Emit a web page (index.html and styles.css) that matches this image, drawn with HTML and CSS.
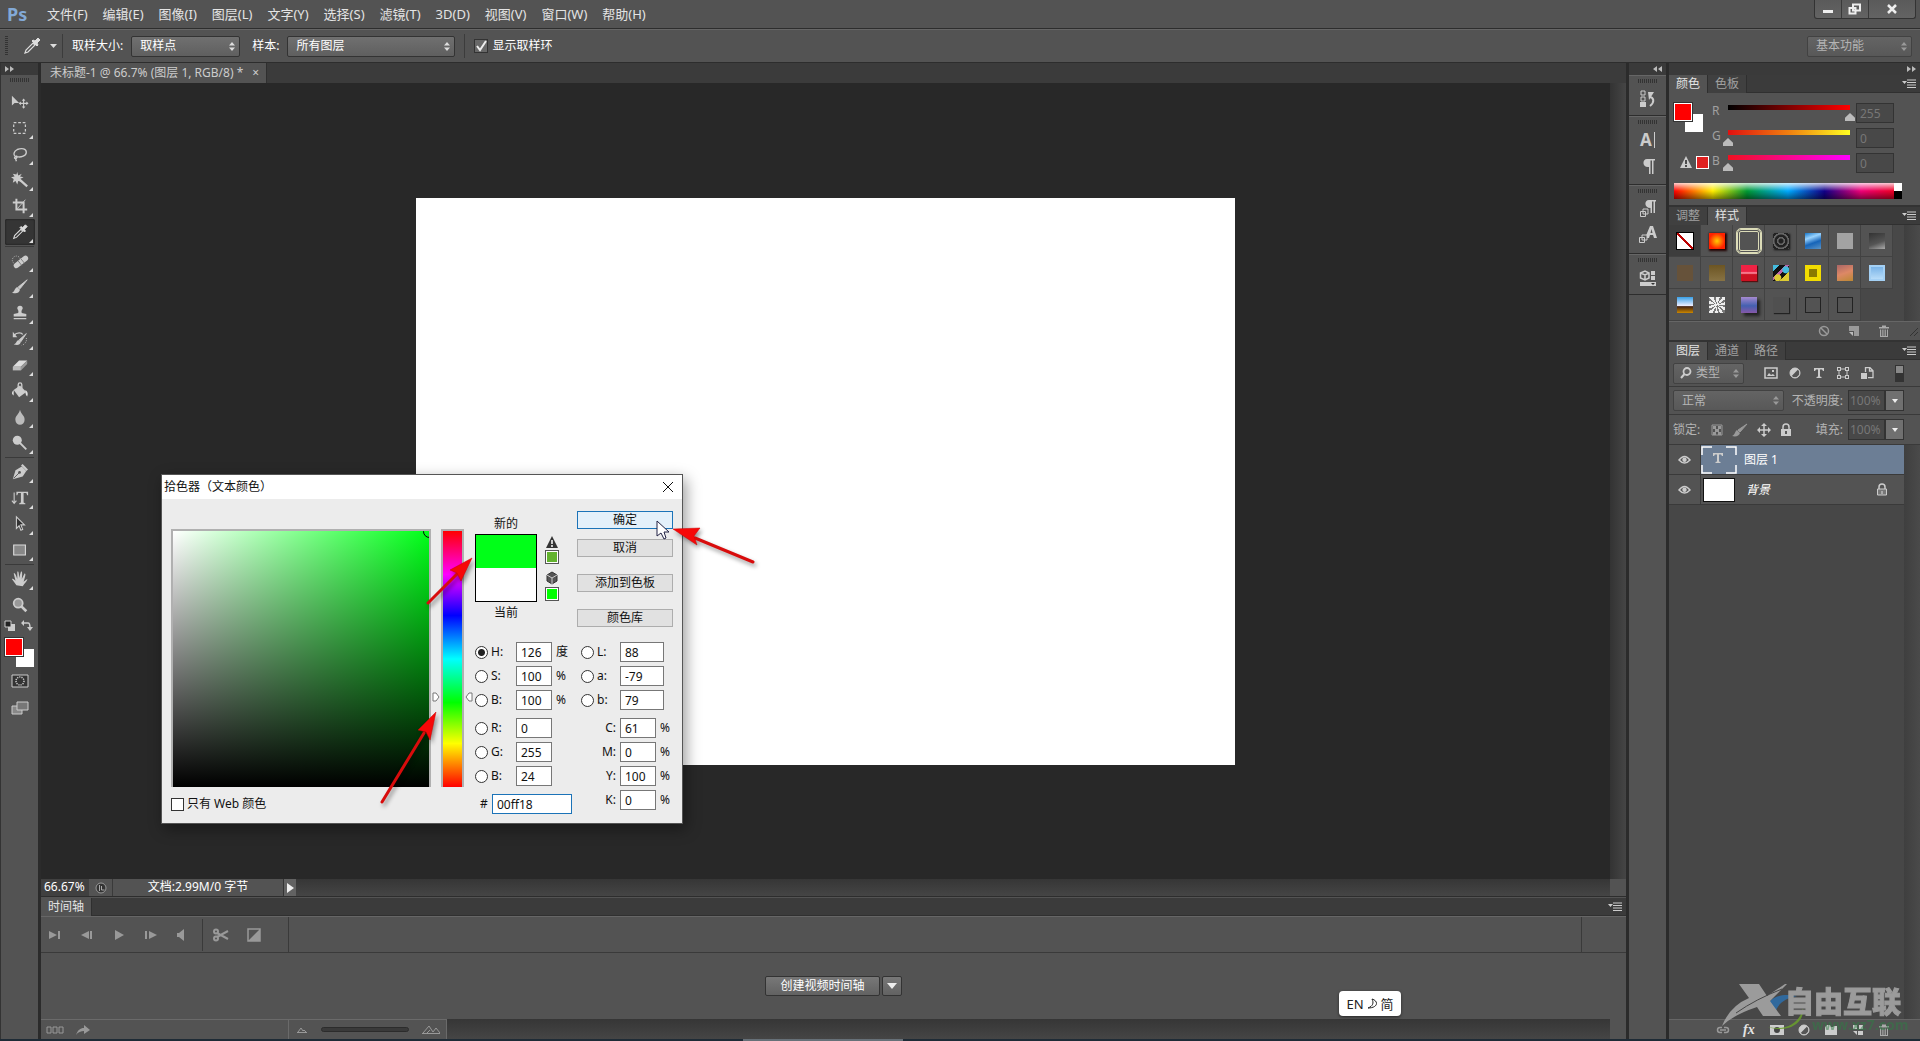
FILE: index.html
```html
<!DOCTYPE html>
<html lang="zh-CN">
<head>
<meta charset="utf-8">
<title>Photoshop</title>
<link rel="stylesheet" href="styles.css">
</head>
<body>
<header class="menubar">
  <span class="logo">Ps</span>
  <nav class="menus">
    <button>文件(F)</button><button>编辑(E)</button><button>图像(I)</button><button>图层(L)</button><button>文字(Y)</button><button>选择(S)</button><button>滤镜(T)</button><button>3D(D)</button><button>视图(V)</button><button>窗口(W)</button><button>帮助(H)</button>
  </nav>
  <div class="winbtns">
    <button aria-label="最小化"><svg width="12" height="12"><path d="M1 7h10v3H1z" fill="#eee"/></svg></button>
    <button aria-label="还原"><svg width="14" height="12"><path d="M5 1.500h7v6H5zM1.500 5h6v5.500h-6z" fill="none" stroke="#eee" stroke-width="2"/></svg></button>
    <button class="wide" aria-label="关闭"><svg width="12" height="12"><path d="M2 2l8 8M10 2l-8 8" stroke="#eee" stroke-width="2.500"/></svg></button>
  </div>
</header>

<div class="options">
  <i class="vgrip"></i>
  <svg class="opt-tool" width="20" height="20" viewBox="0 0 20 20"><use href="#dropper"/></svg>
  <svg width="7" height="4"><path d="M0 0h7L3.500 4z" fill="#ddd"/></svg>
  <i class="vsep"></i>
  <label for="size">取样大小:</label>
  <select id="size" class="sel size"><option>取样点</option></select>
  <label for="sample">样本:</label>
  <select id="sample" class="sel sample"><option>所有图层</option></select>
  <i class="vsep"></i>
  <label class="tick"><input type="checkbox" checked>显示取样环</label>
  <select class="sel dim workspace" aria-label="工作区"><option>基本功能</option></select>
</div>

<main class="work">
  <aside class="tools">
    <div class="dockhead left"><svg width="9" height="6"><path d="M0 0l4 3-4 3zM5 0l4 3-4 3z" fill="#bbb"/></svg></div>
    <i class="hgrip"></i>
    <div class="toollist">
      <button aria-label="移动"><svg viewBox="0 0 20 20"><path d="M1 3v11l3-3h5z" fill="#ccc"/><path d="M14 7v9M9.500 11.500h9" stroke="#ccc" stroke-width="1.200"/><path d="M14 6l2 2.500h-4zM14 17.500l2-2.500h-4zM8.500 11.500l2.500-2v4zM19.500 11.500l-2.500-2v4z" fill="#ccc"/></svg></button>
      <button class="more" aria-label="选框"><svg viewBox="0 0 20 20"><path d="M3 4h13v12H3z" fill="none" stroke="#ccc" stroke-width="1.400" stroke-dasharray="3 2"/></svg></button>
      <button class="more" aria-label="套索"><svg viewBox="0 0 20 20"><path d="M5 13c-3-2-2-6 2-8 5-2 10-1 10 3s-6 6-10 5c-3-1-4 2-2 2s2-2 1-3M5 15l1 3" fill="none" stroke="#ccc" stroke-width="1.500"/></svg></button>
      <button class="more" aria-label="魔棒"><svg viewBox="0 0 20 20"><path d="M7 1l1 4 4-2-2 3 4 1-4 2 2 3-4-1-1 4-2-4-3 2 1-4-3-2 4-1-2-3 4 1z" fill="#ccc"/><path d="M9 9l9 8" stroke="#ccc" stroke-width="2.500"/></svg></button>
      <button class="more" aria-label="裁剪"><svg viewBox="0 0 20 20"><path d="M6 2v12h12M2 6h12v12" fill="none" stroke="#ccc" stroke-width="2.200"/><path d="M7 13l9-10" stroke="#ccc"/></svg></button>
      <button class="more active" aria-label="吸管"><svg viewBox="0 0 20 20"><g id="dropper"><path d="M3 17l1-3 7-7 2 2-7 7z" fill="none" stroke="#ddd" stroke-width="1.200"/><path d="M10 5l1-1 2 1 3-3 2 2-3 3 1 2-1 1z" fill="#ddd" stroke="#ddd"/></g></svg></button>
      <hr>
      <button class="more" aria-label="修复画笔"><svg viewBox="0 0 20 20"><circle cx="6" cy="9" r="4.500" fill="none" stroke="#ccc" stroke-dasharray="1 1.500"/><path d="M6 15l10-8" stroke="#ccc" stroke-width="6" stroke-linecap="round"/><path d="M8 10l4 5M11 7.500l4 5" stroke="#777"/></svg></button>
      <button class="more" aria-label="画笔"><svg viewBox="0 0 20 20"><path d="M18 2l-8 10-2-2z" fill="#ccc" stroke="#ccc"/><path d="M7 10l3 3c-1 4-5 5-9 3 3 0 3-5 6-6z" fill="#ccc"/></svg></button>
      <button class="more" aria-label="图章"><svg viewBox="0 0 20 20"><path d="M8 10c1-3-1-4-1-5a3 3 0 016 0c0 1-2 2-1 5l5 1v3H3v-3zM3 15.500h14V17H3z" fill="#ccc"/></svg></button>
      <button class="more" aria-label="历史画笔"><svg viewBox="0 0 20 20"><path d="M17 4l-6 9-2-2z" fill="#ccc" stroke="#ccc"/><path d="M8 11l3 2c-1 4-4 4-8 3 3-1 3-4 5-5z" fill="#ccc"/><path d="M3 6c4-4 9-3 10-1" fill="none" stroke="#ccc" stroke-width="1.500"/><path d="M2 2v6h5z" fill="#ccc"/><path d="M17 9c1 4-2 7-5 8" fill="none" stroke="#ccc" stroke-dasharray="1 1.500"/></svg></button>
      <button class="more" aria-label="橡皮擦"><svg viewBox="0 0 20 20"><path d="M2 12l7-7h9l-7 7z" fill="#ddd"/><path d="M2 12h9v4H2z" fill="#bbb"/><path d="M11 12l7-7v4l-7 7z" fill="#999"/></svg></button>
      <button class="more" aria-label="油漆桶"><svg viewBox="0 0 20 20"><path d="M3 9l7-5 7 7-8 6z" fill="#ccc"/><path d="M8 9V3a2 2 0 014 0v4" fill="none" stroke="#ccc" stroke-width="1.500"/><path d="M16 9c3 2 3 5 2 7-2-1-2-4-2-7zM3 9c-3 3-2 5 0 6z" fill="#ddd"/></svg></button>
      <button class="more" aria-label="模糊"><svg viewBox="0 0 20 20"><path d="M10 2c1 5 6 7 5 12a5 4.500 0 01-10 0c-1-5 4-7 5-12z" fill="#bbb"/></svg></button>
      <button class="more" aria-label="减淡"><svg viewBox="0 0 20 20"><circle cx="7" cy="7" r="5" fill="#ccc"/><path d="M10 10l7 7" stroke="#ccc" stroke-width="2"/></svg></button>
      <hr>
      <button class="more" aria-label="钢笔"><svg viewBox="0 0 20 20"><path d="M2 18l3-10 7-4 5 5-4 6z" fill="#ccc"/><path d="M12 2l6 6" stroke="#ccc" stroke-width="2.500"/><path d="M3 17l6-6" stroke="#555"/><circle cx="9.500" cy="10.500" r="1.500" fill="#555"/></svg></button>
      <button class="more" aria-label="文字"><svg viewBox="0 0 20 20"><path d="M3.500 4v12M1 13l2.500 3L6 13" fill="none" stroke="#ccc" stroke-width="1.200"/><path d="M6 3h13v4h-1l-1-2.500h-3V15l2 1v1H9v-1l2-1V4.500H8L7 7H6z" fill="#ccc"/></svg></button>
      <button class="more" aria-label="路径选择"><svg viewBox="0 0 20 20"><path d="M6 2v13l3-3 2 5 2-1-2-5h4z" fill="#333" stroke="#ccc" stroke-width="1.200"/></svg></button>
      <button class="more" aria-label="矩形"><svg viewBox="0 0 20 20"><path d="M3 4.500h13v11H3z" fill="#888" stroke="#ddd" stroke-width="1.200"/></svg></button>
      <hr>
      <button class="more" aria-label="抓手"><svg viewBox="0 0 20 20"><path d="M6 17L1 10c1-1 2 0 4 2L3 4c1-1 2 0 4 6V2c1-1 2 0 2 7l2-7c1-1 2 0 1 8l3-6c1 0 2 0-1 9l4-3c1 1-3 5-5 8z" fill="#ccc"/></svg></button>
      <button aria-label="缩放"><svg viewBox="0 0 20 20"><circle cx="8" cy="8" r="5" fill="#999" stroke="#ccc" stroke-width="2"/><path d="M11 11l6 6" stroke="#ccc" stroke-width="3"/></svg></button>
    </div>
    <div class="minis"><svg width="12" height="12"><path d="M4 4h7v7H4z" fill="#ccc"/><path d="M1 1h6v6H1z" fill="#222" stroke="#ccc"/></svg><svg width="12" height="12"><path d="M3 3h4q2 0 2 5" fill="none" stroke="#ccc" stroke-width="1.500"/><path d="M0 3l3-3v6zM6 7h6L9 11z" fill="#ccc"/></svg></div>
    <div class="swatches big"><i class="bg"></i><i class="fg"></i></div>
    <div class="modes">
      <button aria-label="快速蒙版"><svg width="18" height="14"><path d="M1 1h16v12H1z" fill="#333" stroke="#ccc"/><circle cx="9" cy="7" r="4" fill="none" stroke="#ccc" stroke-width="1.500" stroke-dasharray="1.200 1"/></svg></button>
      <button aria-label="屏幕模式"><svg width="18" height="14"><path d="M1 5h10v8H1z" fill="#888" stroke="#ccc"/><path d="M6 1h11v8H6z" fill="#777" stroke="#ccc"/></svg></button>
    </div>
  </aside>

  <section class="center">
    <div class="tabbar"><div class="tab doc">未标题-1 @ 66.7% (图层 1, RGB/8) * <button aria-label="关闭文档">×</button></div></div>
    <div class="stage"><div class="viewport"><div class="paper"></div></div><i class="vscroll"></i></div>
    <div class="status">
      <span class="zoom">66.67%</span>
      <span class="ver"><svg width="12" height="12"><circle cx="6" cy="6" r="5" fill="#333" stroke="#999"/><path d="M4.500 3v6M6.500 4v4h3" stroke="#aaa" fill="none"/></svg></span>
      <span class="size">文档:2.99M/0 字节</span>
      <button aria-label="状态菜单"><svg width="7" height="10"><path d="M0 0l7 5-7 5z" fill="#eee"/></svg></button>
      <i class="hscroll"></i><i class="corner"></i>
    </div>
    <div class="tabbar time"><div class="tab">时间轴</div><svg class="pm" width="14" height="9"><use href="#pm"/></svg></div>
    <div class="transport">
      <div class="keys">
        <button aria-label="首帧"><svg width="12" height="8"><path d="M0 0l8 4-8 4zM9 0h2v8H9z" fill="#999"/></svg></button>
        <button aria-label="上一帧"><svg width="12" height="8"><path d="M8 0L0 4l8 4zM9 0h2v8H9z" fill="#999"/></svg></button>
        <button aria-label="播放"><svg width="12" height="10"><path d="M2 0l9 5-9 5z" fill="#999"/></svg></button>
        <button aria-label="下一帧"><svg width="12" height="8"><path d="M4 0l8 4-8 4zM0 0h2v8H0z" fill="#999"/></svg></button>
        <button aria-label="静音"><svg width="12" height="12"><path d="M0 4h2l5-4v12L2 8H0z" fill="#999"/></svg></button>
      </div>
      <div class="cut">
        <button aria-label="拆分"><svg width="18" height="14"><circle cx="4" cy="3.500" r="2" fill="none" stroke="#999" stroke-width="2"/><circle cx="4" cy="10.500" r="2" fill="none" stroke="#999" stroke-width="2"/><path d="M5 5l11 6M5 9l11-6" stroke="#999" stroke-width="2"/></svg></button>
        <button aria-label="过渡"><svg width="14" height="14"><path d="M1 1h12v12H1z" fill="none" stroke="#999" stroke-width="1.500"/><path d="M13 1v12H1z" fill="#999"/></svg></button>
      </div>
      <i class="ruler"></i>
    </div>
    <div class="tracks"><button class="btn">创建视频时间轴</button><button class="btn drop" aria-label="更多"><svg width="10" height="6"><path d="M0 0h10L5 6z" fill="#eee"/></svg></button></div>
    <div class="timefoot">
      <div class="tf1"><svg width="18" height="8"><path d="M1 1h4v6H1zM7 1h4v6H7zM13 1h4v6h-4z" fill="none" stroke="#999"/></svg><svg width="14" height="10"><path d="M0 10C2 5 4 3 8 3V0l6 5-6 4V6C5 6 2 7 0 10z" fill="#999"/></svg></div>
      <div class="tf2"><svg width="10" height="6"><path d="M0 5.500h10M1 5l3-4 2 3 1-1 2 2" stroke="#999" fill="none"/></svg><input type="range" aria-label="时间轴缩放"><svg width="18" height="9"><path d="M0 8.500h18M1 8l6-7 4 6 3-4 4 5M5 8l3-3" stroke="#999" fill="none"/></svg></div>
      <i class="hscroll"></i><i class="corner"></i>
    </div>
  </section>

  <aside class="dock">
    <div class="dockhead"><svg width="9" height="6"><path d="M4 0L0 3l4 3zM9 0L5 3l4 3z" fill="#bbb"/></svg></div>
    <div class="dgroup"><i class="hgrip"></i><button aria-label="历史记录"><svg width="18" height="20"><path d="M2 2h4v4H2zM2 8h4v4H2z" fill="none" stroke="#ccc"/><path d="M1 13h6v5H1z" fill="#ccc"/><path d="M10 8c5 0 6 5 1 9" fill="none" stroke="#ccc" stroke-width="2"/><path d="M9 3h6l-5 8z" fill="#ccc"/></svg></button></div>
    <div class="dgroup two"><i class="hgrip"></i><button class="chr" aria-label="字符">A<i></i></button><button aria-label="段落"><svg width="18" height="20"><path d="M8 3h8v1.500h-1.500V18H13V4.500h-1.500V18H10v-7c-7 1-7-8-2-8z" fill="#ccc"/></svg></button></div>
    <div class="dgroup two"><i class="hgrip"></i><button aria-label="段落样式"><svg width="18" height="20"><path d="M10 1h7v1.500h-1V14h-1.500V2.500H13V14h-1.500V9C5 9 5 1 10 1z" fill="#ccc"/><path d="M4 10h5v5H4zM1.500 12.500h5v5h-5z" fill="#535353" stroke="#ccc"/></svg></button><button aria-label="字符样式"><svg width="18" height="20"><path d="M6 13L11 1h3l4 12h-3l-1-3h-3l-1 3zM11.500 8h2L12.500 4z" fill="#ccc"/><path d="M3 10h5v5H3zM.5 12.500h5v5h-5z" fill="#535353" stroke="#ccc"/></svg></button></div>
    <div class="dgroup"><i class="hgrip"></i><button aria-label="属性"><svg width="18" height="20"><path d="M1.500 5L6 3l4 2v5l-4 2-4.500-2zM1.500 5L6 7l4-2M6 7v5" fill="none" stroke="#ccc" stroke-width="1.500"/><path d="M12 3h4v4h-4zM12 8h4v4h-4zM1 14h16v4H1z" fill="#ccc"/><path d="M12 15h4l-2 2z" fill="#333"/></svg></button></div>
  </aside>

  <aside class="panels">
    <div class="dockhead"><svg width="9" height="6"><path d="M0 0l4 3-4 3zM5 0l4 3-4 3z" fill="#bbb"/></svg></div>
    <section class="panel">
      <div class="tabbar"><button class="tab">颜色</button><button class="tab off">色板</button><svg class="pm" width="14" height="9"><g id="pm"><path d="M0 2h5L2.500 5z" fill="#ccc"/><path d="M5 1h9M5 3.500h9M5 6h9M5 8.500h9" stroke="#ccc"/></g></svg></div>
      <div class="color">
        <div class="cleft"><div class="swatches"><i class="bg"></i><i class="fg"></i></div><div class="gamut"><svg width="12" height="12"><path d="M6 0l6 12H0z" fill="#ccc"/><path d="M6 4v4M6 9v2" stroke="#222" stroke-width="1.500"/></svg><i></i></div></div>
        <div class="sliders">
          <label for="r">R</label><input id="r" class="r" type="range" max="255" value="255"><input class="num" aria-label="R" value="255">
          <label for="g">G</label><input id="g" class="g" type="range" max="255" value="0"><input class="num" aria-label="G" value="0">
          <label for="b">B</label><input id="b" class="b" type="range" max="255" value="0"><input class="num" aria-label="B" value="0">
        </div>
      </div>
      <div class="spectrum"><i></i></div>
    </section>
    <section class="panel styles">
      <div class="tabbar"><button class="tab off">调整</button><button class="tab">样式</button><svg class="pm" width="14" height="9"><use href="#pm"/></svg></div>
      <div class="stylebody">
        <div class="cells">
          <i class="none"><b class="s1"></b></i><i><b class="s2"></b></i><i><b class="s3"></b></i><i><b class="s4"></b></i><i><b class="s5"></b></i><i><b class="s6"></b></i><i><b class="s7"></b></i>
          <i><b class="s8"></b></i><i><b class="s9"></b></i><i><b class="s10"></b></i><i><b class="s11"></b></i><i><b class="s12"></b></i><i><b class="s13"></b></i><i><b class="s14"></b></i>
          <i><b class="s15"></b></i><i><b class="s16"></b></i><i><b class="s17"></b></i><i><b class="s18"></b></i><i><b class="s19"></b></i><i><b class="s19"></b></i>
        </div>
        <i class="pscroll"></i>
      </div>
      <div class="pfoot"><svg width="12" height="12"><circle cx="6" cy="6" r="4.500" fill="none" stroke="#999" stroke-width="1.500"/><path d="M3 3l6 6" stroke="#999" stroke-width="1.500"/></svg><svg width="12" height="12"><path d="M1 1h10v10H6V6H1z" fill="#999"/><path d="M1 7h4v4z" fill="#bbb"/></svg><svg width="12" height="12"><use href="#trash"/></svg><i class="resize"></i></div>
    </section>
    <section class="panel layers">
      <div class="tabbar"><button class="tab">图层</button><button class="tab off">通道</button><button class="tab off">路径</button><svg class="pm" width="14" height="9"><use href="#pm"/></svg></div>
      <div class="lrow filter">
        <span class="kind"><svg width="12" height="12"><circle cx="7" cy="4.500" r="3.500" fill="none" stroke="#ccc" stroke-width="1.800"/><path d="M4.500 7L1 11" stroke="#ccc" stroke-width="2"/></svg><select class="sel dim" aria-label="滤镜类型"><option>类型</option></select></span>
        <div class="ficons">
          <svg width="14" height="12"><path d="M1 1h12v10H1z" fill="none" stroke="#ccc" stroke-width="1.500"/><path d="M3 9l2-3 2 2 2-1 2 2z" fill="#ccc"/><path d="M8 3h2v2H8z" fill="#ccc"/></svg>
          <svg width="14" height="12"><use href="#adj"/></svg>
          <svg width="14" height="12"><path id="tee" d="M2 1h10v3h-1l-1-1.500H8v7l1.500.5v1h-5v-1L6 9.500v-7H4L3 4H2z" fill="#ccc"/></svg>
          <svg width="14" height="12"><path d="M3 2h8v8H3z" fill="none" stroke="#ccc"/><path d="M1 0h4v4H1zM9 0h4v4H9zM1 8h4v4H1zM9 8h4v4H9z" fill="#ccc"/><path d="M2 1h2v2H2zM10 1h2v2h-2zM2 9h2v2H2zM10 9h2v2h-2z" fill="#555"/></svg>
          <svg width="14" height="12"><path d="M5.500 5V.7H10l3 3v7H8M9.500 1v3H13" fill="none" stroke="#ccc" stroke-width="1.300"/><path d="M1 6h6v6H1z" fill="#ccc"/></svg>
        </div>
        <i class="toggle"></i>
      </div>
      <div class="lrow"><select class="sel dim blend" aria-label="混合模式"><option>正常</option></select><label for="op" class="lab">不透明度:</label><input id="op" class="num pct" value="100%"><button class="dd" aria-label="不透明度滑块"><svg width="6" height="4"><path d="M0 0h6L3 4z" fill="#eee"/></svg></button></div>
      <div class="lrow lock"><span>锁定:</span>
        <div class="locks">
        <svg width="12" height="12"><path d="M1 1h10v10H1z" fill="none" stroke="#999"/><path d="M2 2h3v3H2zM7 2h3v3H7zM4 5h4v3H4zM2 8h3v3H2zM7 8h3v3H7z" fill="#999"/></svg>
        <svg width="16" height="14"><path d="M15 1L8 9 6 7z" fill="#999" stroke="#999"/><path d="M5 7l3 3c-1 3-4 4-8 3 3-1 3-5 5-6z" fill="#999"/></svg>
        <svg width="14" height="14"><path d="M7 2v10M2 7h10" stroke="#ccc" stroke-width="1.500"/><path d="M7 0l3 3H4zM7 14l3-3H4zM0 7l3-3v6zM14 7l-3-3v6z" fill="#ccc"/></svg>
        <svg width="12" height="14"><path d="M1 6h10v7H1z" fill="#ccc"/><path d="M3 6V4a3 3 0 016 0v2" fill="none" stroke="#ccc" stroke-width="1.500"/><path d="M6 8v3" stroke="#333" stroke-width="1.500"/></svg>
        </div>
        <label for="fill" class="lab">填充:</label><input id="fill" class="num pct" value="100%"><button class="dd" aria-label="填充滑块"><svg width="6" height="4"><path d="M0 0h6L3 4z" fill="#eee"/></svg></button></div>
      <div class="list">
        <div class="rows">
          <div class="layer on"><span class="eye"><svg width="13" height="10"><g id="eye"><path d="M1 5q5.500-7 11 0-5.500 6-11 0z" fill="none" stroke="#ccc" stroke-width="1.500"/><circle cx="6.500" cy="4.800" r="2.200" fill="#ccc"/></g></svg></span><span class="lmain"><svg class="thumb" width="36" height="28"><path d="M1 9V1h10M25 1h10v8M35 19v8H25M11 27H1v-8" fill="none" stroke="#fff" stroke-width="1.500"/><use href="#tee" x="10" y="6"/></svg>图层 1</span></div>
          <div class="layer"><span class="eye"><svg width="13" height="10"><use href="#eye"/></svg></span><span class="lmain"><i class="white"></i><em>背景</em><svg class="padlock" width="12" height="14"><path d="M1.500 6h9v6h-9z" fill="#777" stroke="#ccc"/><path d="M3 6V4a3 3 0 016 0v2" fill="none" stroke="#ccc" stroke-width="1.500"/><path d="M6 8v3" stroke="#ddd"/></svg></span></div>
        </div>
        <i class="pscroll"></i>
      </div>
      <div class="pfoot acts">
        <svg width="14" height="12"><path d="M6 3.500H4a2.500 2.500 0 000 5h2M8 3.500h2a2.500 2.500 0 010 5H8M4 6h6" fill="none" stroke="#999" stroke-width="1.500"/></svg>
        <span class="fx">fx</span>
        <svg width="14" height="12"><path d="M0 1h14v10H0z" fill="#ccc"/><circle cx="7" cy="6" r="3" fill="#444"/></svg>
        <svg width="14" height="12"><g id="adj"><circle cx="7" cy="6" r="5" fill="#ccc"/><path d="M10 2.500A4.500 4.500 0 113.700 9z" fill="#555"/><circle cx="7" cy="6" r="5" fill="none" stroke="#ccc"/></g></svg>
        <svg width="14" height="12"><path d="M1 3l2-2h3l1 2 2 0 1-1h3v9H1z" fill="#ccc"/></svg>
        <svg width="14" height="12"><path d="M2 1h4v4H2zM8 1h4v10H7V7h5V5H8z" fill="#ccc"/><path d="M2 7h4v4z" fill="#ccc"/></svg>
        <svg width="12" height="12"><path id="trash" d="M1 2h3V.5h4V2h3v1.500H1zM2 4.500h1.200V11H2zM4.300 4.500h1.200V11H4.300zM6.600 4.500h1.200V11H6.600zM9 4.500h1V11H9zM2 11h8v1H2z" fill="#aaa"/></svg>
      </div>
    </section>
  </aside>
</main>
<div class="taskbar"><i></i></div>

<div class="dialog" role="dialog" aria-label="拾色器">
  <header>拾色器（文本颜色）<button aria-label="关闭"><svg width="12" height="12"><path d="M1 1l10 10M11 1L1 11" stroke="#111"/></svg></button></header>
  <div class="dbody">
    <div class="pick"><div class="field"><i></i></div><label class="web"><input type="checkbox">只有 Web 颜色</label></div>
    <div class="hue"><svg width="8" height="10"><path d="M1 1h3l3 4-3 4H1z" fill="#fff" stroke="#777"/></svg><i></i><svg width="8" height="10"><path d="M7 1H4L1 5l3 4h3z" fill="#fff" stroke="#777"/></svg></div>
    <div class="dright">
      <div class="dtop">
        <div class="newcur"><span>新的</span><i></i><span>当前</span></div>
        <div class="alerts"><svg width="14" height="12"><path d="M7 0l6 12H1z" fill="#333"/><path d="M7 4v4M7 9v2" stroke="#fff" stroke-width="1.500"/></svg><i class="near"></i><svg width="14" height="14"><path d="M7 1l5 3v6l-5 3-5-3V4z" fill="#555" stroke="#333"/><path d="M2 4l5 3 5-3M7 7v6" fill="none" stroke="#ccc"/></svg><i class="safe"></i></div>
        <div class="dbtns"><button class="ok">确定</button><button>取消</button><button class="gap">添加到色板</button><button class="gap">颜色库</button></div>
      </div>
      <div class="values">
        <div class="vcol">
          <div><label><input type="radio" name="c" checked>H:</label><input aria-label="H" value="126"><span>度</span></div>
          <div><label><input type="radio" name="c">S:</label><input aria-label="S" value="100"><span>%</span></div>
          <div><label><input type="radio" name="c">B:</label><input aria-label="亮度" value="100"><span>%</span></div>
          <div class="grp"><label><input type="radio" name="c">R:</label><input aria-label="红" value="0"></div>
          <div><label><input type="radio" name="c">G:</label><input aria-label="绿" value="255"></div>
          <div><label><input type="radio" name="c">B:</label><input aria-label="蓝" value="24"></div>
          <div class="hex"><label for="hex">#</label><input id="hex" value="00ff18"></div>
        </div>
        <div class="vcol lab2">
          <div><label><input type="radio" name="c">L:</label><input class="w" aria-label="L" value="88"></div>
          <div><label><input type="radio" name="c">a:</label><input class="w" aria-label="a" value="-79"></div>
          <div><label><input type="radio" name="c">b:</label><input class="w" aria-label="b" value="79"></div>
          <div class="grp"><label for="vc">C:</label><input id="vc" value="61"><span>%</span></div>
          <div><label for="vm">M:</label><input id="vm" value="0"><span>%</span></div>
          <div><label for="vy">Y:</label><input id="vy" value="100"><span>%</span></div>
          <div><label for="vk">K:</label><input id="vk" value="0"><span>%</span></div>
        </div>
      </div>
    </div>
  </div>
  <svg class="arrows" width="620" height="360" viewBox="161 475 620 360">
    <g stroke="#d80c0c" stroke-width="3" stroke-linecap="round"><path d="M428 604l30-30M382 803l42-69M753 563l-58-24"/></g>
    <path d="M472 559l-22 12 7 3 4 8zM436 713l-18 18 8 2 4 8zM673 530l27-1-6 8 3 9z" fill="#f60808" stroke="#c00" stroke-width=".5"/>
  </svg>
  <svg class="cursor" width="14" height="20"><path d="M1 1v15l4-3 3 6 2-1-2-6h5z" fill="#fff" stroke="#224"/></svg>
</div>

<div class="ime">EN <svg width="11" height="12"><path d="M5 1c7 2 6 9-4 9 5-2 6-5 4-9z" fill="none" stroke="#222"/></svg> 简</div>
<div class="mark">
  <svg width="190" height="50" viewBox="1720 980 190 50"><path d="M1765 1014c0-14 12-22 32-18-12 2-20 8-22 18z" fill="#2d70ad"/><path d="M1768 1027c20 4 32-5 35-19 2 14-14 26-35 19z" fill="#6aa02c"/><path d="M1739 984h20l8 12 18-12h2l-17 17 11 15h-18l-6-9q-24 8-35 19 8-20 27-28z" fill="#aaa"/><path d="M1736 1013q20-14 46-24" stroke="#474747" fill="none"/></svg>
  <span class="name">自由互联</span><span class="url">www.xz7.com</span>
</div>
</body>
</html>
```
FILE: styles.css
```css
* { box-sizing: border-box; }
body {
  margin: 0; min-height: 100vh; display: flex; flex-direction: column; position: relative;
  background: #535353; color: #e4e4e4;
  font: 12px/16px "Noto Sans", "Noto Sans CJK SC", sans-serif;
}
button, input, select { font: inherit; color: inherit; margin: 0; }
button { background: none; border: 0; padding: 0; display: flex; align-items: center; justify-content: center; }
svg { display: block; flex: none; }
i { display: block; flex: none; font-style: normal; }

.menubar { height: 29px; flex: none; display: flex; align-items: center; border-bottom: 1px solid #2d2d2d; position: relative; }
.logo { width: 47px; padding-left: 7px; font-size: 18px; font-weight: 700; color: #82a9d6; }
.menus { display: flex; gap: 15px; font-size: 13px; }
.winbtns { display: flex; margin-left: auto; margin-right: 4px; align-self: flex-start; border: 1px solid #333; border-top: 0; border-radius: 0 0 3px 3px; background: linear-gradient(#5a5a5a, #636363); }
.winbtns button { width: 27px; height: 18px; border-right: 1px solid #3a3a3a; }
.winbtns .wide { width: 46px; border: 0; }

.options { height: 34px; flex: none; display: flex; align-items: center; border-top: 1px solid #666; border-bottom: 1px solid #2d2d2d; padding: 0 8px 0 5px; color: #fff; }
.vgrip { width: 3px; height: 20px; background: repeating-linear-gradient(#333 0 1px, #535353 1px 2px); }
.opt-tool { margin: 0 8px 0 14px; }
.vsep { width: 1px; height: 24px; background: #3c3c3c; margin: 0 9px 0 5px; }
.sel { appearance: none; height: 21px; padding: 0 8px; border: 1px solid #333; border-radius: 2px; background: url("data:image/svg+xml,%3Csvg xmlns='http://www.w3.org/2000/svg' width='7' height='9'%3E%3Cpath d='M0 3.500L3 0l3 3.500zM0 5.500h6L3 9z' fill='%23ddd'/%3E%3C/svg%3E") no-repeat right 3px center, linear-gradient(#707070, #5f5f5f); }
.sel.dim { color: #b4b4b4; border-color: #424242; background-image: url("data:image/svg+xml,%3Csvg xmlns='http://www.w3.org/2000/svg' width='7' height='9'%3E%3Cpath d='M0 3.500L3 0l3 3.500zM0 5.500h6L3 9z' fill='%23999'/%3E%3C/svg%3E"), linear-gradient(#646464, #585858); }
.sel.size { width: 109px; margin: 0 12px 0 8px; }
.sel.sample { width: 168px; margin: 0 4px 0 8px; }
.sel.workspace { width: 105px; margin-left: auto; }
.tick { display: flex; align-items: center; gap: 4px; }
.tick input { appearance: none; width: 14px; height: 14px; border: 1px solid #333; background: url("data:image/svg+xml,%3Csvg xmlns='http://www.w3.org/2000/svg' width='12' height='12'%3E%3Cpath d='M2 6l3 4 6-9' fill='none' stroke='%23eee' stroke-width='2'/%3E%3C/svg%3E") #686868; }

.work { flex: 1; display: flex; background: #2b2b2b; gap: 3px; }
.dockhead { height: 12px; flex: none; background: #3a3a3a; display: flex; align-items: center; justify-content: flex-end; padding: 0 4px; }
.dockhead.left { justify-content: flex-start; }
.hgrip { width: 20px; height: 4px; margin: 3px auto; background: repeating-linear-gradient(90deg, #333 0 1px, #535353 1px 2px); }

.tools { width: 38px; background: #535353; border-left: 1px solid #333; }
.toollist { padding-top: 4px; }
.toollist button { position: relative; width: 30px; height: 26px; margin: 0 auto; border-radius: 2px; }
.toollist svg { width: 18px; height: 18px; }
.toollist .active { background: #353535; box-shadow: inset 0 0 2px #111; }
.toollist .more::after { content: ""; position: absolute; right: 2px; bottom: 2px; border-left: 4px solid transparent; border-bottom: 4px solid #ddd; }
.toollist hr { margin: 1px 4px; border: 0; height: 1px; background: #3a3a3a; }
.minis { display: flex; justify-content: space-between; padding: 2px 5px 0 3px; height: 20px; }
.swatches { position: relative; width: 29px; height: 29px; }
.swatches i { position: absolute; width: 18px; height: 18px; }
.swatches .bg { right: 0; bottom: 0; background: #fff; }
.swatches .fg { left: 0; top: 0; background: red; border: 1px solid #fff; outline: 1px solid #333; }
.swatches.big { margin-left: 4px; }
.modes { display: grid; gap: 13px; justify-content: center; padding-top: 7px; }

.center { flex: 1; min-width: 0; display: flex; flex-direction: column; background: #535353; }
.tabbar { height: 18px; flex: none; display: flex; background: #3b3b3b; border-bottom: 1px solid #303030; }
.tab { display: flex; align-items: center; padding: 0 7px; background: #535353; border-right: 1px solid #2f2f2f; height: 18px; }
.tab.off { background: #404040; color: #a0a0a0; }
.tab.doc { height: 20px; padding: 0 7px 0 9px; gap: 9px; color: #ccc; }
.center > .tabbar:first-child { height: 20px; border: 0; }
.pm { margin: 4px 4px 0 auto; }
.stage { flex: 1; display: flex; min-height: 600px; }
.viewport { flex: 1; display: flex; align-items: center; justify-content: center; background: #282828; }
.paper { width: 819px; height: 567px; background: #fff; }
.vscroll { width: 16px; background: linear-gradient(90deg, #333, #454545); }
.status { height: 18px; flex: none; display: flex; align-items: stretch; border-bottom: 1px solid #2d2d2d; }
.status .zoom { width: 48px; padding-left: 3px; background: #404040; color: #fff; }
.status .ver { width: 24px; display: grid; place-items: center; border-right: 1px solid #3a3a3a; }
.status .size { width: 170px; text-align: center; color: #fff; }
.status button { width: 13px; background: #626262; border-left: 1px solid #333; }
.hscroll { flex: 1; background: linear-gradient(#363636, #454545); }
.corner { width: 16px; background: #535353; }
.time { margin-top: 1px; }
.transport { height: 37px; flex: none; display: flex; align-items: center; border-top: 1px solid #666; border-bottom: 1px solid #3a3a3a; }
.keys { width: 162px; height: 32px; display: flex; align-items: center; gap: 20px; padding-left: 8px; border-right: 1px solid #3a3a3a; }
.cut { width: 86px; align-self: stretch; display: flex; align-items: center; gap: 17px; padding-left: 9px; border-right: 1px solid #3a3a3a; }
.ruler { flex: 1; align-self: stretch; border-right: 1px solid #3a3a3a; margin-right: 44px; }
.tracks { height: 66px; flex: none; display: flex; align-items: center; justify-content: center; gap: 2px; }
.btn { height: 20px; padding: 0 14px; border: 1px solid #333; border-radius: 2px; background: linear-gradient(#787878, #626262); color: #fff; }
.btn.drop { padding: 0 4px; }
.timefoot { height: 20px; flex: none; display: flex; }
.tf1, .tf2 { display: flex; align-items: center; border-top: 1px solid #6a6a6a; border-right: 1px solid #6a6a6a; }
.tf1 { width: 248px; padding-left: 5px; gap: 12px; }
.tf2 { width: 158px; padding: 0 6px 0 8px; justify-content: space-between; }
.tf2 input { appearance: none; width: 88px; height: 5px; border-radius: 3px; background: #3a3a3a; border: 1px solid #2c2c2c; }
.tf2 input::-webkit-slider-thumb { appearance: none; width: 0; height: 0; }

.dock { width: 37px; background: #535353; }
.dgroup { border-bottom: 1px solid #2d2d2d; border-top: 1px solid #666; height: 41px; display: flex; flex-direction: column; align-items: center; }
.dgroup.two { height: 69px; }
.dgroup button { width: 24px; height: 26px; }
.dgroup .chr { font: 700 17px/20px "Noto Sans"; color: #ccc; gap: 2px; }
.chr i { width: 1px; height: 16px; background: #ccc; }

.panels { width: 251px; display: flex; flex-direction: column; }
.panel { background: #535353; border-bottom: 2px solid #333; }
.color { display: flex; padding: 10px 0 0 5px; height: 89px; }
.cleft { width: 38px; }
.color .swatches { margin-bottom: 24px; }
.gamut { display: flex; gap: 4px; padding-left: 6px; }
.gamut i { width: 13px; height: 13px; background: #e02020; border: 1px solid #fff; }
.sliders { display: grid; grid-template-columns: 11px 132px 38px; grid-auto-rows: 20px; gap: 5px 0; color: #a0a0a0; align-items: start; }
.sliders .num { height: 20px; margin-left: 1px; }
.sliders input[type=range] { appearance: none; width: 132px; height: 18px; margin: 2px 0 0; background: linear-gradient(90deg, #000, red) no-repeat center top / 122px 5px; }
.sliders .g { background-image: linear-gradient(90deg, #e01010, #f08010, #ff2) !important; }
.sliders .b { background-image: linear-gradient(90deg, #f01020, #f0f) !important; }
.sliders input::-webkit-slider-thumb { appearance: none; width: 10px; height: 8px; margin-top: 6px; background: #bbb; clip-path: polygon(50% 0, 100% 60%, 100% 100%, 0 100%, 0 60%); }
.num { width: 38px; height: 21px; padding: 0 3px; border: 1px solid #333; background: #484848; color: #777; }
.spectrum { height: 16px; margin: 1px 18px 6px 5px; display: flex; justify-content: flex-end; background: linear-gradient(#fffc, #fff0 50%, #0007), linear-gradient(90deg, #f00, #fe0 17%, #093 32%, #0af 50%, #108 66%, #e07 82%, #e01 100%); }
.spectrum i { width: 8px; background: linear-gradient(#fff 50%, #000 50%); }
.stylebody { display: flex; justify-content: space-between; background: #484848; }
.cells { display: grid; grid-template-columns: repeat(7, 32px); grid-auto-rows: 32px; }
.cells i { display: grid; place-items: center; background: #535353; border-right: 1px solid #424242; border-bottom: 1px solid #424242; }
.cells .none { background: #3d3d3d; }
.cells b { width: 16px; height: 16px; }
.pscroll { width: 16px; background: linear-gradient(90deg, #3f3f3f, #4a4a4a); }
.s1 { background: linear-gradient(45deg, transparent 44%, #b00 44% 56%, transparent 56%) #fff; box-shadow: 0 0 0 1px #000; }
.s2 { background: radial-gradient(#fc0, #f20 70%); box-shadow: 1px 1px 2px 1px #200; }
.cells .s3 { width: 24px; height: 24px; border: 3px double #dcdcb8; border-radius: 4px; outline: 1px solid #dcdcb8; }
.s4 { background: repeating-radial-gradient(#222 0 2px, #666 3px 4px); box-shadow: 1px 1px 2px #111; }
.s5 { background: linear-gradient(160deg, #1676c8, #9ad4ff 30%, #1664b8 60%, #5a94c8); }
.s6 { background: #a3a3a3; }
.s7 { background: linear-gradient(160deg, #333, #555 60%, #aaa); }
.s8 { background: #66523a; }
.s9 { background: linear-gradient(#6c5523, #887344); }
.s10 { background: linear-gradient(#e24, #e24 40%, #f9a 50%, #c12 60%); box-shadow: 1px 1px 1px #511; }
.s11 { background: radial-gradient(circle at 30% 80%, #dc3 0 3px, transparent 4px), radial-gradient(circle at 80% 30%, #4bd 0 3px, transparent 4px), linear-gradient(135deg, #4bd 20%, #111 20% 40%, #b6a 40% 50%, #111 50% 70%, #dc3 70%); }
.s12 { background: #8a7a00; border: 4px solid #f2dc00; }
.s13 { background: linear-gradient(160deg, #a66, #d86 50%, #b83); }
.s14 { background: linear-gradient(#7ab4e8, #b8dcf8); border: 2px solid #a4d0f4; }
.s15 { background: linear-gradient(#38a0e8, #eef 55%, #421 60%, #c80); }
.s16 { background: repeating-conic-gradient(#eee 0 20deg, #777 20deg 35deg); }
.s17 { background: linear-gradient(#a68ad0, #4460b0 55%, #8658a8); box-shadow: 3px 3px 3px #222; }
.s18 { background: #505050; box-shadow: 1px 1px 1px #222; }
.s19 { border: 1px solid #222; }
.pfoot { height: 19px; display: flex; align-items: center; justify-content: flex-end; gap: 18px; border-top: 1px solid #666; padding-right: 2px; }
.resize { width: 10px; height: 10px; background: repeating-linear-gradient(135deg, #535353 0 2px, #333 2px 3px); clip-path: polygon(100% 0, 100% 100%, 0 100%); }
.layers { flex: 1; display: flex; flex-direction: column; border: 0; }
.lrow { height: 28px; flex: none; display: flex; align-items: center; padding: 0 16px 0 4px; border-bottom: 1px solid #3a3a3a; color: #b4b4b4; }
.filter { height: 27px; }
.kind { position: relative; display: flex; align-items: center; }
.kind svg { position: absolute; left: 7px; }
.kind .sel { width: 71px; padding-left: 22px; }
.ficons { display: flex; gap: 10px; margin-left: 20px; }
.toggle { width: 9px; height: 17px; margin-left: auto; background: linear-gradient(#888 45%, #333 45%); border: 1px solid #333; }
.blend { width: 111px; }
.lab { margin-left: auto; margin-right: 5px; }
.pct { width: 37px; height: 21px; padding: 0 1px; }
.dd { width: 19px; height: 21px; background: #707070; border: 1px solid #333; }
.lock { height: 30px; }
.locks { display: flex; align-items: center; gap: 9px; margin-left: 11px; }
.list { flex: 1; display: flex; background: #474747; }
.rows { flex: 1; }
.layer { display: flex; height: 30px; background: #535353; border-bottom: 1px solid #3a3a3a; }
.eye { width: 32px; display: grid; place-items: center; border-right: 1px solid #3a3a3a; }
.lmain { flex: 1; display: flex; align-items: center; color: #fff; gap: 7px; }
.on .lmain { background: #6c7e95; }
.white { width: 32px; height: 24px; margin: 0 4px 0 2px; background: #fff; border: 1px solid #111; }
.padlock { margin: 0 16px 0 auto; }
.acts { gap: 13px; height: 20px; padding-right: 30px; }
.fx { font: italic 700 14px/16px "Liberation Serif", serif; width: 14px; }

.taskbar { height: 2px; flex: none; background: #1e2b36; }
.taskbar i { width: 160px; height: 2px; margin-left: 743px; background: #667078; }

.dialog { position: absolute; left: 161px; top: 474px; width: 522px; background: #ececec; color: #111; border: 1px solid #555; box-shadow: 3px 5px 14px #0006; }
.dialog header { display: flex; justify-content: space-between; align-items: center; height: 24px; padding: 0 8px 0 2px; background: #fff; }
.dbody { display: flex; padding: 0 10px 9px 9px; }
.pick { padding-top: 30px; }
.field { position: relative; overflow: hidden; width: 260px; height: 258px; border: 2px solid #b0b0b0; border-bottom: 0; background: linear-gradient(to top, #000, transparent), linear-gradient(to right, #fff, #00ff18); }
.field i { position: absolute; right: -7px; top: -6px; width: 13px; height: 13px; border: 1px solid #000; border-radius: 50%; }
.web { display: flex; align-items: center; gap: 3px; margin-top: 9px; }
.web input { appearance: none; width: 13px; height: 13px; border: 1px solid #333; background: #fff; }
.hue { display: flex; gap: 1px; padding: 30px 2px 0 1px; height: 288px; }
.hue i { width: 23px; border: 2px solid #b0b0b0; border-bottom: 0; background: linear-gradient(#f00, #f0f 17%, #00f 33%, #0ff 50%, #0f0 67%, #ff0 83%, #f00); }
.hue svg { margin-top: 163px; }
.dright { flex: 1; }
.dtop { display: flex; height: 143px; }
.newcur { width: 62px; padding-top: 17px; text-align: center; }
.newcur i { height: 68px; margin: 2px 0 3px; border: 1px solid #000; background: linear-gradient(#00ff18 50%, #fff 50%); }
.alerts { padding: 37px 0 0 8px; display: flex; flex-direction: column; }
.alerts i { width: 14px; height: 14px; margin: 2px 0 7px; border: 1px solid #555; box-shadow: inset 0 0 0 1px #fff; }
.near { background: #63b32e; }
.safe { background: #0f0; }
.dbtns { flex: 1; margin-left: 18px; padding-top: 12px; display: flex; flex-direction: column; gap: 10px; }
.dbtns button { height: 18px; border: 1px solid #adadad; background: #e1e1e1; }
.dbtns .gap { margin-top: 7px; }
.dbtns .ok { background: #e3f0fa; border-color: #1b73b8; }
.values { display: flex; }
.vcol { width: 106px; display: flex; flex-direction: column; gap: 4px; }
.vcol > div { display: flex; align-items: center; height: 20px; }
.vcol .grp { margin-top: 4px; }
.vcol label { width: 41px; display: flex; align-items: center; gap: 3px; }
.vcol div > input { width: 36px; height: 20px; padding: 0 4px; border: 1px solid #777; background: #fff; }
.vcol input[type=radio] { appearance: none; width: 13px; height: 13px; border: 1px solid #333; border-radius: 50%; background: #fff; flex: none; }
.vcol input[type=radio]:checked { background: radial-gradient(#222 0 3px, #fff 4px); }
.vcol span { margin-left: 4px; }
.vcol div > .w { width: 44px; }
.lab2 { width: 92px; }
.lab2 label { width: 39px; }
.lab2 label[for] { justify-content: flex-end; padding-right: 4px; }
.vcol .hex { margin-top: 4px; }
.vcol .hex label { width: 17px; padding-left: 5px; }
.vcol .hex input { width: 80px; border-color: #1b73b8; }
.arrows { position: absolute; left: -1px; top: -1px; overflow: visible; filter: drop-shadow(2px 3px 2px #0006); pointer-events: none; }
.cursor { position: absolute; left: 494px; top: 45px; }

.ime { position: absolute; left: 1339px; bottom: 25px; width: 62px; height: 25px; display: flex; align-items: center; justify-content: center; gap: 3px; background: #fff; color: #222; border-radius: 4px; box-shadow: 0 1px 3px #0008; font-size: 13px; }
.mark { position: absolute; right: 10px; bottom: 11px; width: 190px; height: 50px; opacity: .85; pointer-events: none; }
.mark svg, .mark span { position: absolute; }
.mark .name { left: 65px; top: 6px; font: 900 29px/28px "Noto Sans CJK SC", sans-serif; color: #aaa; -webkit-text-stroke: 1px #aaa; white-space: nowrap; }
.mark .url { left: 92px; top: 38px; font: 700 14px/14px "Open Sans", sans-serif; color: #2f7d45; opacity: .6; }
```
